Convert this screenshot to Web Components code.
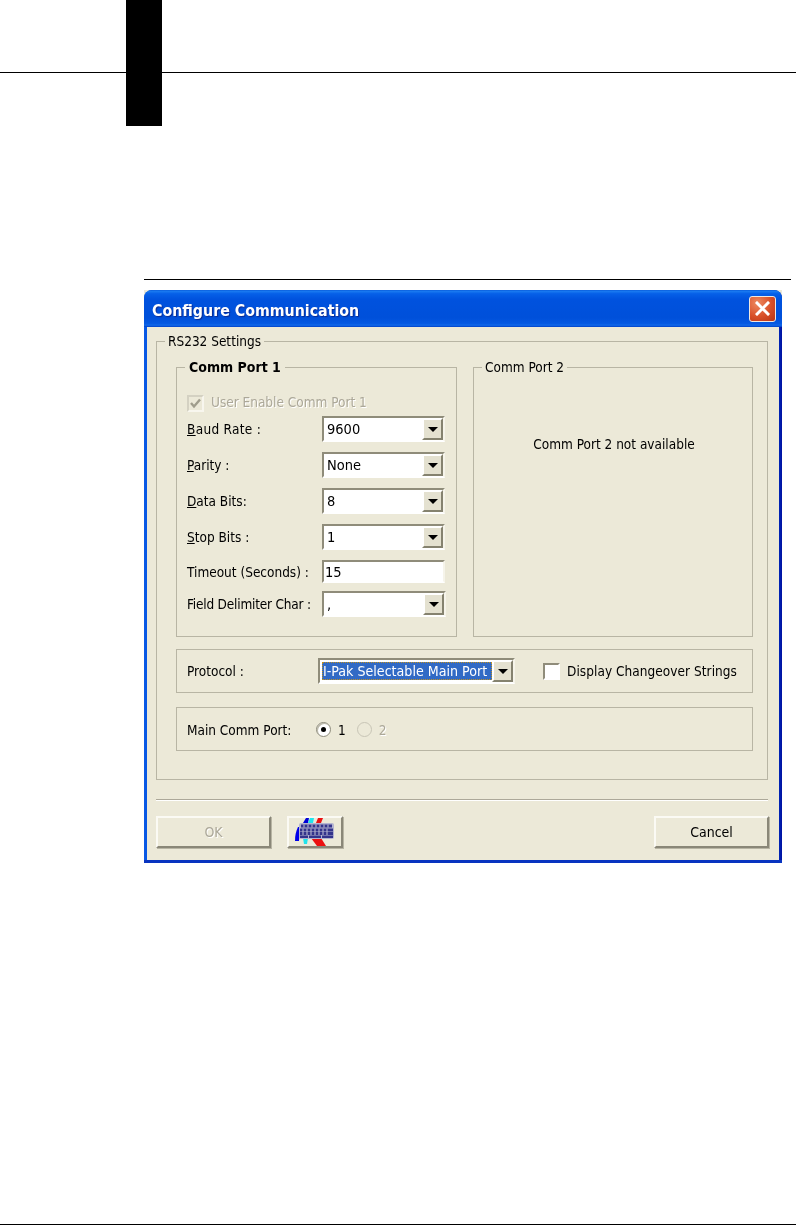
<!DOCTYPE html>
<html><head><meta charset="utf-8"><title>Configure Communication</title>
<style>html,body{margin:0;padding:0;background:#fff}</style></head><body>
<x-page>
  <x-dialog heading="Configure Communication">
    <x-group legend="RS232 Settings" style="height:447px;width:612px" pad="10px 0 0 19px">
      <div style="display:flex;gap:16px;width:577px">
        <x-group legend="Comm Port 1" bold style="width:281px;height:278px" pad="25px 0 0 10px">
          <div style="display:flex;flex-direction:column;gap:10px">
            <x-check checked disabled style="height:6px">User Enable Comm Port 1</x-check>
            <x-field key="B" rest="aud Rate :" style="letter-spacing:.3px"><x-combo>9600</x-combo></x-field>
            <x-field key="P" rest="arity :"><x-combo>None</x-combo></x-field>
            <x-field key="D" rest="ata Bits:"><x-combo>8</x-combo></x-field>
            <x-field key="S" rest="top Bits :"><x-combo>1</x-combo></x-field>
            <x-field rest="Timeout (Seconds) :"><x-text-input>15</x-text-input></x-field>
            <x-field rest="Field Delimiter Char :" style="margin-top:-2px;letter-spacing:-.2px"><x-combo style="width:124px">,</x-combo></x-field>
          </div>
        </x-group>
        <x-group legend="Comm Port 2" style="width:280px;height:278px" pad="60px 0 0 2px">
          <div style="text-align:center;line-height:18px">Comm Port 2 not available</div>
        </x-group>
      </div>
      <x-panel style="margin-top:12px">
        <span style="width:131px">Protocol :</span>
        <x-combo selected style="width:197px">I-Pak Selectable Main Port</x-combo>
        <x-check style="margin-left:28px;letter-spacing:.05px">Display Changeover Strings</x-check>
      </x-panel>
      <x-panel style="margin-top:14px;padding-top:1px">
        <span style="width:129px">Main Comm Port:</span>
        <x-radio checked>1</x-radio>
        <x-radio disabled style="margin-left:11px">2</x-radio>
      </x-panel>
    </x-group>
    <div style="height:2px;width:612px;margin-top:19px;background:#aca899;border-bottom:1px solid #fff;box-sizing:border-box"></div>
    <div style="display:flex;margin-top:15px;width:613px;height:32px">
      <x-button disabled style="width:115px">OK</x-button>
      <x-button style="width:56px;margin-left:16px">
        <svg width="41" height="30" viewBox="0 0 41 30" style="display:block;margin:2px 0 0 -2px" aria-hidden="true">
          <path d="M1 23 Q1 15 4 9 L6 9 L5 23Z" fill="#0000e8"/>
          <path d="M9 5 L12 0 L15 0 L14 5Z" fill="#0000d8"/>
          <path d="M14 5 L16 0 L20 0 L19 5Z" fill="#20e4ec"/>
          <path d="M22 5 L24 0 L29 0 L27 5Z" fill="#ec1010"/>
          <path d="M9 20 L14 20 L13 26 L10 26Z" fill="#20e4ec"/>
          <path d="M17 20 L27 20 L32 28 L23 28Z" fill="#ec1010"/>
          <rect x="5" y="5" width="35" height="16" rx="2" fill="#b4b4d0"/>
          <g fill="#34348c">
            <rect x="7" y="6.500" width="31" height="3"/>
            <rect x="6" y="10.500" width="33" height="3"/>
            <rect x="6" y="14" width="33" height="3"/>
            <rect x="6" y="17.500" width="8" height="2.500"/><rect x="15" y="17.500" width="12" height="2.500"/><rect x="28" y="17.500" width="11" height="2.500"/>
          </g>
          <g stroke="#b4b4d0" stroke-width="1.1">
            <path d="M10 6.500V9.500M14 6.500V9.500M18 6.500V9.500M22 6.500V9.500M26 6.500V9.500M30 6.500V9.500M34 6.500V9.500"/>
            <path d="M9 10.500V17M13 10.500V17M17 10.500V17M21 10.500V17M25 10.500V17M29 10.500V17M33 10.500V17"/>
          </g>
        </svg>
      </x-button>
      <span style="flex:1"></span>
      <x-button style="width:115px">Cancel</x-button>
    </div>
  </x-dialog>
</x-page>
<script>
const FONT='"DejaVu Sans","Liberation Sans",sans-serif';
function def(name,css,html,init){
  customElements.define(name,class extends HTMLElement{
    constructor(){super();this.attachShadow({mode:'open'}).innerHTML='<style>'+css+'</style>'+html;}
    connectedCallback(){if(init)init(this,this.shadowRoot);}
  });
}
def('x-page',`:host{display:flex;flex-direction:column;height:1225px;position:relative;overflow:hidden;background:#fff;font-family:${FONT};font-stretch:condensed}
 .head{height:72px;border-bottom:1px solid #000;flex:none}
 .tab{position:absolute;left:126px;top:0;width:36px;height:126px;background:#000}
 .rule{margin:206px 0 0 144px;width:647px;height:1px;background:#000;flex:none}
 .slot{display:block;margin:10px 0 0 144px;flex:none}
 .foot{margin-top:auto;height:1px;background:#000;flex:none}`,
 `<div class="head"></div><div class="tab"></div><div class="rule"></div><div class="slot"><slot></slot></div><div class="foot"></div>`);
def('x-dialog',`:host{display:block;width:638px;height:573px;background:#ece9d8;font-size:13.5px;color:#000;filter:blur(.35px)}
 .frame{height:100%;box-sizing:border-box;border-radius:8px 8px 0 0;background:linear-gradient(90deg,#0a5ae6,#0050e0 1%,#0040d0 99%,#0010a0);padding:0 3px 3px;display:flex;flex-direction:column;box-shadow:inset 0 -3px 0 #0834c0}
 .bar{height:37px;flex:none;margin:0 -3px;border-radius:8px 8px 0 0;display:flex;align-items:center;justify-content:space-between;padding:0 6px 0 8px;box-sizing:border-box;
  background:linear-gradient(180deg,#0a5fdc 0,#1878f0 4%,#0660e8 10%,#0052de 25%,#0050da 75%,#0458e2 90%,#1068ea 95%,#0040c8 100%)}
 .title{color:#fff;font:bold 15.8px "DejaVu Sans",sans-serif;font-stretch:condensed;text-shadow:1px 1px 1px #0a2a90;white-space:nowrap;padding-top:3px}
 .close{width:27px;height:26px;box-sizing:border-box;border:1px solid #f0e8e0;border-radius:3px;background:radial-gradient(circle at 30% 25%,#ee8a60,#d84f28 55%,#b83414);display:flex;align-items:center;justify-content:center}
 .client{flex:1;background:#ece9d8;padding:6px 0 0 9px}`,
 `<div class="frame"><div class="bar"><span class="title"></span><span class="close"><svg width="15" height="15" viewBox="0 0 15 15"><path d="M2 2L13 13M13 2L2 13" stroke="#fff" stroke-width="3" stroke-linecap="square"/></svg></span></div><div class="client"><slot></slot></div></div>`,
 (h,s)=>{s.querySelector('.title').textContent=h.getAttribute('heading');});
def('x-group',`:host{display:block;box-sizing:border-box}
 fieldset{box-sizing:border-box;height:100%;margin:0;border:1px solid #b8b5a4;padding:0;min-width:0}
 legend{margin-left:8px;padding:0 3px;line-height:16px;height:16px;white-space:nowrap}
 legend.b{font-weight:bold;font-size:14px;padding:0 4px}`,
 `<fieldset><legend></legend><div class="in"><slot></slot></div></fieldset>`,
 (h,s)=>{const l=s.querySelector('legend');l.textContent=h.getAttribute('legend');if(h.hasAttribute('bold'))l.className='b';s.querySelector('.in').style.padding=h.getAttribute('pad')||'0';});
def('x-panel',`:host{display:flex;align-items:center;box-sizing:border-box;width:577px;height:44px;border:1px solid #b8b5a4;padding-left:10px;white-space:nowrap}
 ::slotted(span){flex:none}`,`<slot></slot>`);
def('x-field',`:host{display:flex;align-items:center;white-space:nowrap}
 .l{width:135px;flex:none}u{text-underline-offset:1px}`,
 `<span class="l"><u></u><span class="r"></span></span><slot></slot>`,
 (h,s)=>{s.querySelector('u').textContent=h.getAttribute('key')||'';s.querySelector('.r').textContent=h.getAttribute('rest')||'';});
const sunken=`box-sizing:border-box;border:2px solid;border-color:#8f8c7a #f6f4ea #fff #8f8c7a;background:#fff;`;
def('x-combo',`:host{display:flex;box-sizing:border-box;width:123px;height:26px;${sunken}white-space:nowrap;align-items:stretch;font-size:14.5px;letter-spacing:0}
 .v{flex:1;display:flex;align-items:center;padding-left:3px;min-width:0;overflow:hidden}
 :host([selected]){font-size:14.1px}
 :host([selected]) .v{margin:2px 0 2px 2px;padding-left:1px;background:#316ac5;color:#fff;outline:1px dotted #c09020;outline-offset:-1px}
 .b{width:21px;flex:none;box-sizing:border-box;background:#e4e1d0;border:2px solid;border-color:#fff #85826f #85826f #fff;display:flex;align-items:center;justify-content:center}
 .b i{width:0;height:0;border:5px solid transparent;border-top:5px solid #000;border-bottom:0}`,
 `<span class="v"><slot></slot></span><span class="b"><i></i></span>`);
def('x-text-input',`:host{display:flex;align-items:center;box-sizing:border-box;width:123px;height:23px;${sunken}padding-left:1px;font-size:14.500px}`,`<slot></slot>`);
def('x-check',`:host{display:flex;align-items:center;gap:7px;white-space:nowrap}
 .box{width:17px;height:17px;box-sizing:border-box;border:2px solid;border-color:#8f8c7a #fff #fff #8f8c7a;background:#fff;flex:none;display:block}
 :host([disabled]) .box{border-color:#d4d1c2 #f8f6ee #f8f6ee #d4d1c2;background:#ece9d8}
 :host([disabled]) .t{color:#aca899;text-shadow:1px 1px 0 #fff;margin-bottom:2px}
 svg{display:none}:host([checked]) svg{display:block}`,
 `<span class="box"><svg width="13" height="13" viewBox="0 0 13 13"><path d="M2 6L5 9.500L11 2.500" fill="none" stroke="#a09d8c" stroke-width="2.400"/></svg></span><span class="t"><slot></slot></span>`);
def('x-radio',`:host{display:flex;align-items:center;gap:7px}
 .o{width:15px;height:15px;box-sizing:border-box;border-radius:50%;border:1px solid #8c8a7a;background:#fff;box-shadow:inset 1px 1px 0 #bbb8a8;display:flex;align-items:center;justify-content:center;flex:none}
 i{width:5px;height:5px;border-radius:50%;background:#000;display:none}
 :host([checked]) i{display:block}
 :host([disabled]) .o{background:#ece9d8;border-color:#c8c5b6;box-shadow:none}
 :host([disabled]) .t{color:#aca899;text-shadow:1px 1px 0 #fff}`,
 `<span class="o"><i></i></span><span class="t"><slot></slot></span>`);
def('x-button',`:host{display:flex;align-items:center;justify-content:center;box-sizing:border-box;height:32px;background:#ece9d8;border:2px solid;border-color:#fbfaf4 #8a8778 #8a8778 #fbfaf4;box-shadow:1px 1px 0 #b8b5a4;font-size:14px}
 :host([disabled]){color:#aca899;text-shadow:1px 1px 0 #fff}`,`<slot></slot>`);
</script>
</body></html>
